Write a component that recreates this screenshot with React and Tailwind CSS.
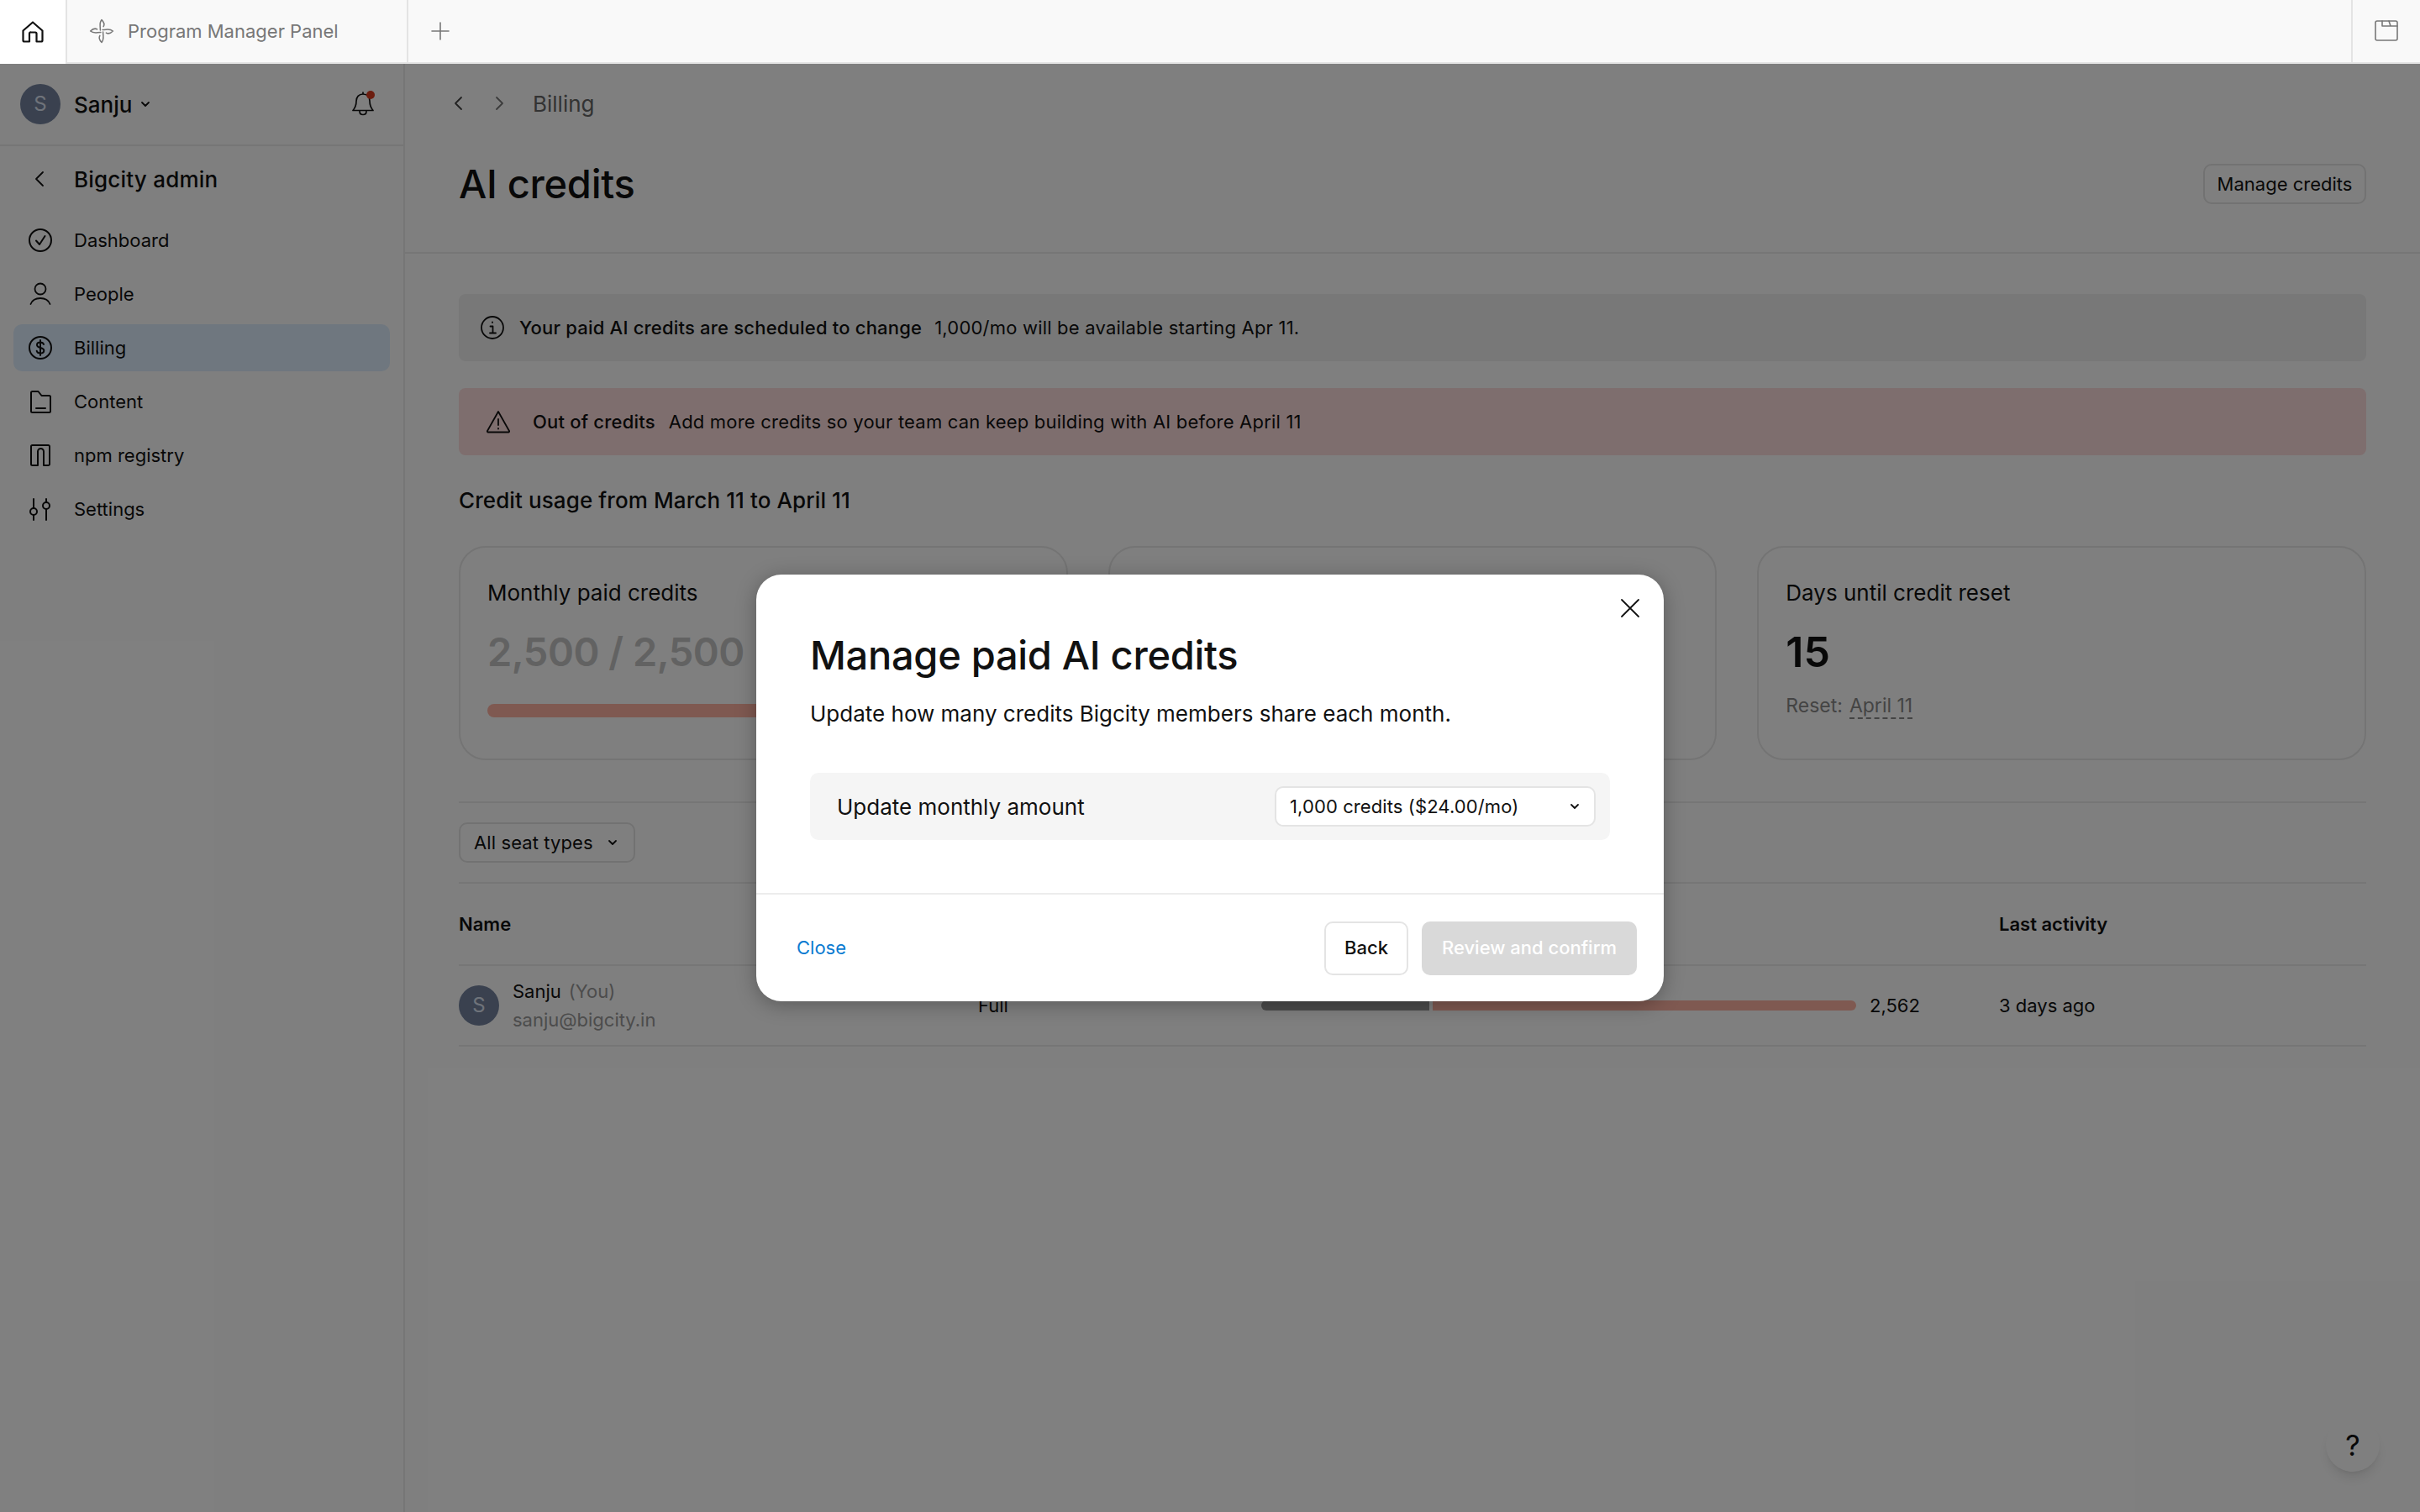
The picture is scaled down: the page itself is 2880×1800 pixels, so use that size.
import React from "react";

const S = ({ children, className = "w-7 h-7", sw = 2, vb = "0 0 28 28" }) => (
  <svg viewBox={vb} className={className} fill="none" stroke="currentColor" strokeWidth={sw} strokeLinecap="round" strokeLinejoin="round">
    {children}
  </svg>
);

const Chevron = ({ className = "w-3 h-3" }) => (
  <S vb="0 0 12 12" sw={1.8} className={className}><path d="M2 4l4 4 4-4" /></S>
);

const nav = [
  ["Dashboard", <S key="a"><circle cx="14" cy="14" r="13" /><path d="M9 14.500l4 4.500 6.500-10" /></S>],
  ["People", <S key="b" sw={1.8}><circle cx="14" cy="8" r="6.500" /><path d="M2.500 26c2-5 6.500-7 11.500-7s9.500 2 11.500 7" /></S>],
  ["Billing", <S key="c"><circle cx="14" cy="14" r="13" /><path d="M18 10c-.5-1.600-2-2.500-4-2.500-2.500 0-4 1.300-4 3.200 0 4.300 8.300 2.300 8.300 6.500 0 2-1.800 3.300-4.300 3.300-2.200 0-3.800-1-4.300-2.800M14 5v18" /></S>],
  ["Content", <S key="d"><path d="M3 3.500A1.500 1.500 0 014.500 2h7l4 5h9A1.500 1.500 0 0126 8.500v17a1.500 1.500 0 01-1.500 1.500h-20A1.500 1.500 0 013 25.500zM9 22h11" /></S>],
  ["npm registry", <S key="e"><path d="M11 26H4.500A1.500 1.500 0 013 24.500v-21A1.500 1.500 0 014.500 2h19A1.500 1.500 0 0125 3.500v21a1.500 1.500 0 01-1.500 1.500H18V9.500a3.500 3.500 0 00-7 0z" /></S>],
  ["Settings", <S key="f"><circle cx="6" cy="17" r="4" /><circle cx="21" cy="10" r="4" /><path d="M6 2v11M6 21v6M21 2v4M21 14v13" /></S>],
];

export default function App() {
  return (
    <div className="relative flex h-[1800px] w-[2880px] flex-col overflow-hidden bg-white font-['Inter','Liberation_Sans',sans-serif] text-[#111111]">
      {/* Tab bar */}
      <header className="flex h-[76px] shrink-0 bg-[#f9f9f9] text-[#777777]">
        <div className="flex w-[80px] items-center justify-center border-r-2 border-[#e4e4e4] bg-white text-[#111111]">
          <S className="h-[26px] w-[26px]" sw={2.200} vb="0 0 26 26">
            <path d="M1.500 11.500L13 1.500l11.500 10V23a1.500 1.500 0 01-1.500 1.500h-5.500V15a1.500 1.500 0 00-1.500-1.500h-5A1.500 1.500 0 009 15v9.500H3A1.500 1.500 0 011.500 23z" />
          </S>
        </div>
        <div className="flex w-[406px] items-center gap-[16px] border-r-2 border-b-2 border-[#e4e4e4] pl-[26px]">
          <S className="h-[30px] w-[30px] shrink-0" sw={1.400} vb="0 0 28 28">
            <path d="M12.500 13C12.500 8 11 5 14 1.500C16.500 4 17.500 6.500 16 9" />
            <path d="M12.500 13C12.500 8 11 5 14 1.500C16.500 4 17.500 6.500 16 9" transform="rotate(90 14 14)" />
            <path d="M12.500 13C12.500 8 11 5 14 1.500C16.500 4 17.500 6.500 16 9" transform="rotate(180 14 14)" />
            <path d="M12.500 13C12.500 8 11 5 14 1.500C16.500 4 17.500 6.500 16 9" transform="rotate(270 14 14)" />
          </S>
          <span className="text-[22px]">Program Manager Panel</span>
        </div>
        <div className="flex flex-1 items-center border-b-2 border-[#e4e4e4] pl-[27px]">
          <S className="h-[22px] w-[22px]" sw={1.600} vb="0 0 22 22"><path d="M11 1v20M1 11h20" /></S>
        </div>
        <div className="flex w-[82px] items-center justify-center border-l-2 border-b-2 border-[#e4e4e4]">
          <S className="h-[26px] w-[28px]" sw={1.600} vb="0 0 28 26">
            <rect x="1" y="1" width="26" height="23" rx="2" />
            <path d="M9 1v6h18M17 1l2 6" />
          </S>
        </div>
      </header>

      {/* Body */}
      <div className="relative flex min-h-0 flex-1">
        {/* Sidebar */}
        <aside className="w-[482px] shrink-0 border-r-2 border-[#ececec]">
          <div className="flex h-[98px] items-center border-b-2 border-[#ececec] pl-[24px] pr-[35px]">
            <div className="flex h-[48px] w-[48px] items-center justify-center rounded-full bg-[#74839f] text-[24px] text-[#dfe6f5]">S</div>
            <span className="ml-[16px] text-[26px] font-medium">Sanju</span>
            <Chevron className="ml-[10px] h-[12px] w-[12px]" />
            <div className="relative ml-auto">
              <S className="h-[30px] w-[26px]" sw={1.700} vb="0 0 26 30">
                <path d="M13 3c-5 0-8 3.500-8 8.500 0 5.500-1.500 8-4 11h24c-2.500-3-4-5.500-4-11C21 6.500 18 3 13 3zM13 1v2M9 23.500c0 2.500 1.500 4 4 4s4-1.500 4-4" />
              </S>
              <span className="absolute right-[-1px] top-[-1px] h-[10px] w-[10px] rounded-full bg-[#d93a1e]" />
            </div>
          </div>
          <div className="flex h-[78px] items-center pl-[40px]">
            <S className="h-[20px] w-[14px]" sw={1.800} vb="0 0 14 20"><path d="M11 2L3 10l8 8" /></S>
            <span className="ml-[34px] text-[26px] font-medium tracking-[0.2px]">Bigcity admin</span>
          </div>
          <nav className="px-[16px] pt-[6px]">
            {nav.map(([label, icon]) => (
              <div key={label} className={`flex h-[56px] items-center rounded-[10px] pl-[18px] mb-[8px] ${label === "Billing" ? "bg-[#dfeeff]" : ""}`}>
                {icon}
                <span className="ml-[26px] text-[22px]">{label}</span>
              </div>
            ))}
          </nav>
        </aside>

        {/* Main */}
        <main className="min-w-0 flex-1">
          <div className="h-[226px] border-b-2 border-[#ececec] px-[64px]">
            <div className="flex h-[94px] items-center text-[#444444]">
              <S className="ml-[-7px] h-[20px] w-[12px]" sw={1.800} vb="0 0 12 20"><path d="M10 3l-7 7 7 7" /></S>
              <S className="ml-[38px] h-[20px] w-[12px] text-[#777777]" sw={1.800} vb="0 0 12 20"><path d="M2 3l7 7-7 7" /></S>
              <span className="ml-[33px] text-[26px] text-[#666666]">Billing</span>
            </div>
            <div className="flex h-[98px] items-center justify-between">
              <h1 className="text-[47px] font-medium tracking-[-0.3px]">AI credits</h1>
              <button className="flex h-[48px] w-[194px] items-center justify-center rounded-[10px] border-2 border-[#e4e4e4] text-[22px]">Manage credits</button>
            </div>
          </div>

          <div className="px-[64px] pt-[48px]">
            <div className="flex h-[80px] items-center rounded-[8px] bg-[#f0f0f0] pl-[26px] text-[22px] tracking-[0.2px]">
              <S className="h-[28px] w-[28px]" sw={1.800}>
                <circle cx="14" cy="14" r="13" />
                <path d="M11.500 12.500H14.500V20M11 20.500h7M14 7.500v.5" />
              </S>
              <strong className="ml-[18px] font-medium">Your paid AI credits are scheduled to change</strong>
              <span className="ml-[15px]">1,000/mo will be available starting Apr 11.</span>
            </div>
            <div className="mt-[32px] flex h-[80px] items-center rounded-[8px] bg-[#fddcdc] pl-[33px] text-[22px] tracking-[0.2px]">
              <S className="h-[28px] w-[28px]" sw={1.800}>
                <path d="M14 2L27 25a1 1 0 01-1 1.500H2A1 1 0 011 25zM14 11v7M14 22v.5" />
              </S>
              <strong className="ml-[27px] font-medium">Out of credits</strong>
              <span className="ml-[16px]">Add more credits so your team can keep building with AI before April 11</span>
            </div>

            <h2 className="mt-[37px] text-[26px] font-medium leading-[34px] tracking-[0.1px]">Credit usage from March 11 to April 11</h2>

            <div className="mt-[37px] grid h-[255px] grid-cols-3 gap-[48px]">
              <div className="rounded-[32px] border-2 border-[#e8e8e8] px-[32px] pt-[38px]">
                <p className="text-[26px] leading-[32px]">Monthly paid credits</p>
                <p className="mt-[26px] text-[47px] font-semibold leading-[56px] tracking-[-0.5px] text-[#c4c4c4]">2,500 / 2,500</p>
                <div className="mt-[34px] h-[16px] rounded-full bg-[#ffb3a3]" />
              </div>
              <div className="rounded-[32px] border-2 border-[#e8e8e8]" />
              <div className="rounded-[32px] border-2 border-[#e8e8e8] px-[32px] pt-[38px]">
                <p className="text-[26px] leading-[32px]">Days until credit reset</p>
                <p className="mt-[26px] text-[50px] font-semibold leading-[56px]">15</p>
                <p className="mt-[21px] text-[23px] leading-[30px] text-[#888888]">
                  Reset:<span className="ml-[8px] border-b-2 border-dashed border-[#888888]">April 11</span>
                </p>
              </div>
            </div>

            <div className="mt-[49px] flex h-[98px] items-center border-y-2 border-[#ececec]">
              <button className="flex h-[48px] w-[210px] items-center rounded-[10px] border-2 border-[#e4e4e4] pl-[16px] text-[22px] tracking-[0.1px]">
                All seat types
                <Chevron className="ml-[17px] h-[12px] w-[12px]" />
              </button>
            </div>

            <div className="flex h-[98px] items-center border-b-2 border-[#ececec] text-[22px] font-semibold">
              <span className="w-[1833px]">Name</span>
              <span>Last activity</span>
            </div>

            <div className="flex h-[96px] items-center border-b-2 border-[#ececec] text-[22px]">
              <div className="flex h-[48px] w-[48px] shrink-0 items-center justify-center rounded-full bg-[#74839f] text-[24px] text-[#dfe6f5]">S</div>
              <div className="ml-[16px] w-[554px] leading-[34px]">
                <div>Sanju<span className="ml-[9px] text-[#999999]">(You)</span></div>
                <div className="text-[#999999]">sanju@bigcity.in</div>
              </div>
              <span className="w-[337px]">Full</span>
              <div className="flex w-[708px] items-center gap-[4px]">
                <div className="h-[12px] w-[200px] rounded-l-full bg-[#999999]" />
                <div className="h-[12px] w-[504px] rounded-r-full bg-[#ffb3a3]" />
              </div>
              <span className="ml-[16px] w-[154px]">2,562</span>
              <span>3 days ago</span>
            </div>
          </div>
        </main>

        {/* Help button */}
        <button className="absolute right-[48px] top-[1612px] flex h-[64px] w-[64px] items-center justify-center rounded-full bg-white text-[34px] shadow-lg">?</button>

        {/* Dim overlay */}
        <div className="absolute inset-0 bg-black/50" />

        {/* Modal */}
        <div className="absolute left-[900px] top-[608px] w-[1080px] rounded-[30px] bg-white shadow-[0_4px_24px_rgba(0,0,0,0.3)]">
          <button className="absolute right-[28px] top-[28px]">
            <S className="h-[24px] w-[24px]" sw={1.800} vb="0 0 24 24"><path d="M2 2l20 20M22 2L2 22" /></S>
          </button>
          <div className="h-[381px] border-b-2 border-[#ececec] px-[64px] pt-[64px]">
            <h2 className="text-[47px] font-medium leading-[64px] tracking-[-0.3px]">Manage paid AI credits</h2>
            <p className="mt-[19px] text-[26px] leading-[38px]">Update how many credits Bigcity members share each month.</p>
            <div className="mt-[51px] flex h-[80px] items-center justify-between rounded-[10px] bg-[#f5f5f5] pl-[32px] pr-[17px]">
              <span className="text-[26px]">Update monthly amount</span>
              <div className="flex h-[48px] w-[382px] items-center justify-between rounded-[10px] border-2 border-[#e4e4e4] bg-white pl-[16px] pr-[17px] text-[22px] tracking-[0.1px]">
                1,000 credits ($24.00/mo)
                <Chevron className="h-[12px] w-[12px]" />
              </div>
            </div>
          </div>
          <div className="flex h-[127px] items-center justify-between pl-[48px] pr-[32px]">
            <a className="text-[22px] text-[#0a7bd1]">Close</a>
            <div className="flex gap-[16px]">
              <button className="h-[64px] w-[100px] rounded-[10px] border-2 border-[#e4e4e4] text-[22px] font-medium">Back</button>
              <button className="h-[64px] w-[256px] rounded-[10px] bg-[#d9d9d9] text-[22px] font-medium text-white">Review and confirm</button>
            </div>
          </div>
        </div>
      </div>
    </div>
  );
}
